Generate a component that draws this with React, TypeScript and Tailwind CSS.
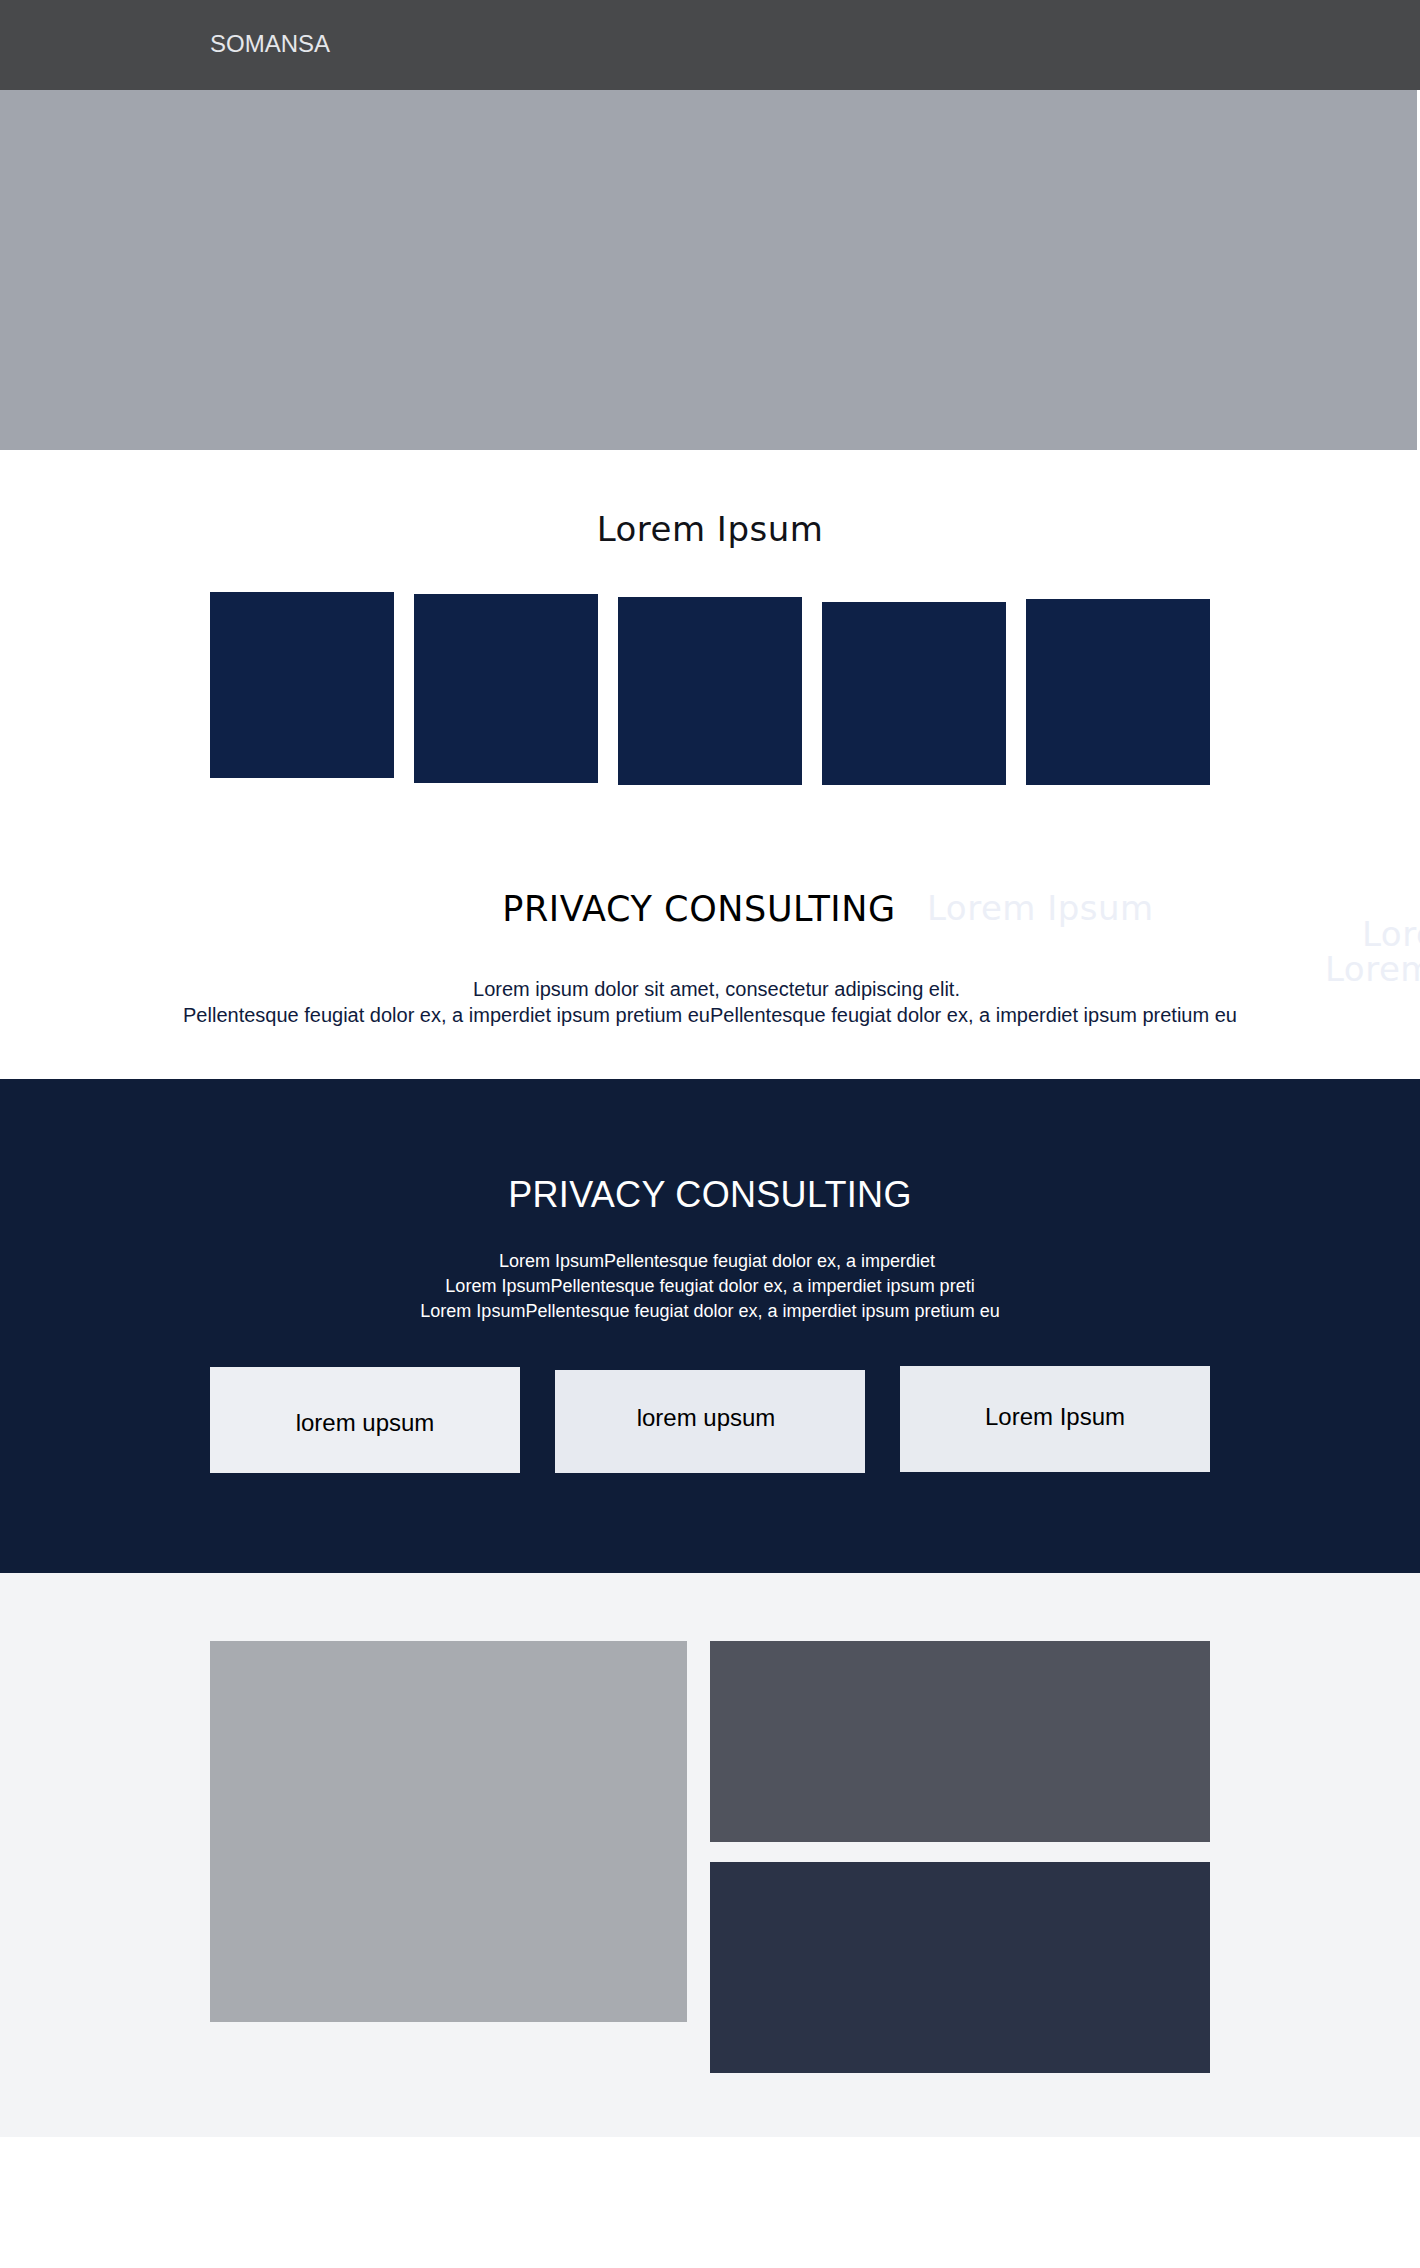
const sans = "font-['Liberation_Sans',Arial,sans-serif]";
const verdana = "font-['DejaVu_Sans',Verdana,sans-serif]";

const tiles = [
  { mt: "mt-0", h: "h-[186px]" },
  { mt: "mt-[2px]", h: "h-[189px]" },
  { mt: "mt-[5px]", h: "h-[188px]" },
  { mt: "mt-[10px]", h: "h-[183px]" },
  { mt: "mt-[7px]", h: "h-[186px]" },
];

const Header = () => (
  <header className="h-[90px] w-full bg-[#48494b]">
    <div className="max-w-[1000px] mx-auto h-full flex items-center pb-[2px]">
      <span className={`${sans} text-[24px] text-[#e5e7eb]`}>SOMANSA</span>
    </div>
  </header>
);

const Intro = () => (
  <section className="relative bg-white pt-[60px] pb-[51px]">
    <h2 className={`${verdana} text-[34px] tracking-[0.5px] text-[#111318] text-center leading-[1.164]`}>Lorem Ipsum</h2>

    <div className="max-w-[1000px] mx-auto mt-[42px] flex items-start gap-[20px]">
      {tiles.map((t, i) => (
        <div key={i} className={`w-[184px] ${t.h} ${t.mt} bg-[#0e2147]`} />
      ))}
    </div>

    <div className="mt-[104px] flex justify-center">
      <h2 className={`${verdana} text-[35px] tracking-[0.6px] text-black leading-[1.164] pr-[22px] whitespace-nowrap`}>
        PRIVACY CONSULTING
      </h2>
    </div>

    {/* faded sliding titles */}
    <span className={`${verdana} absolute left-[927px] top-[439px] text-[34px] tracking-[0.5px] leading-[1.164] text-[#eceff7] whitespace-nowrap`}>
      Lorem Ipsum
    </span>
    <span className={`${verdana} absolute left-[1362px] top-[465px] text-[34px] tracking-[0.5px] leading-[1.164] text-[#eceff7] whitespace-nowrap`}>
      Lorem Ipsum
    </span>
    <span className={`${verdana} absolute left-[1325px] top-[500px] text-[34px] tracking-[0.5px] leading-[1.164] text-[#eceff7] whitespace-nowrap`}>
      Lorem Ipsum
    </span>

    <div className={`${sans} mt-[47px] text-[20px] leading-[26px] text-[#0f1b3d] text-center whitespace-nowrap`}>
      <p className="pl-[13px]">Lorem ipsum dolor sit amet, consectetur adipiscing elit.</p>
      <p>Pellentesque feugiat dolor ex, a imperdiet ipsum pretium euPellentesque feugiat dolor ex, a imperdiet ipsum pretium eu</p>
    </div>
  </section>
);

const Consulting = () => (
  <section className="bg-[#0f1d38] pt-[89px] pb-[100px]">
    <h2 className={`${sans} text-[36px] tracking-[0.3px] text-white text-center`}>PRIVACY CONSULTING</h2>
    <div className={`${sans} mt-[27px] text-[18px] leading-[25px] text-white text-center`}>
      <p className="pl-[14px]">Lorem IpsumPellentesque feugiat dolor ex, a imperdiet</p>
      <p>Lorem IpsumPellentesque feugiat dolor ex, a imperdiet ipsum preti</p>
      <p>Lorem IpsumPellentesque feugiat dolor ex, a imperdiet ipsum pretium eu</p>
    </div>

    <div className={`${sans} max-w-[1000px] mx-auto mt-[42px] flex items-start gap-[35px] text-[24px] text-black`}>
      <div className="w-[310px] h-[106px] mt-[1px] bg-[#edeff3] flex items-center justify-center pt-[6px]">
        lorem upsum
      </div>
      <div className="w-[310px] h-[103px] mt-[4px] bg-[#e7eaf0] flex items-center justify-center pb-[8px] pr-[8px]">
        lorem upsum
      </div>
      <div className="w-[310px] h-[106px] bg-[#e8ebf0] flex items-center justify-center pb-[4px]">
        Lorem Ipsum
      </div>
    </div>
  </section>
);

const Gallery = () => (
  <section className="bg-[#f3f4f6] pt-[68px] pb-[64px]">
    <div className="max-w-[1000px] mx-auto flex items-start gap-[23px]">
      <div className="w-[477px] h-[381px] bg-[#a8abb0]" />
      <div className="w-[500px] flex flex-col gap-[20px]">
        <div className="h-[201px] bg-[#50535d]" />
        <div className="h-[211px] bg-[#2b3347]" />
      </div>
    </div>
  </section>
);

export default function App() {
  return (
    <div className="w-[1420px] min-h-[2268px] bg-white overflow-hidden">
      <Header />
      <div className="w-[1417px] h-[360px] bg-[#a1a5ad]" />
      <Intro />
      <Consulting />
      <Gallery />
    </div>
  );
}
